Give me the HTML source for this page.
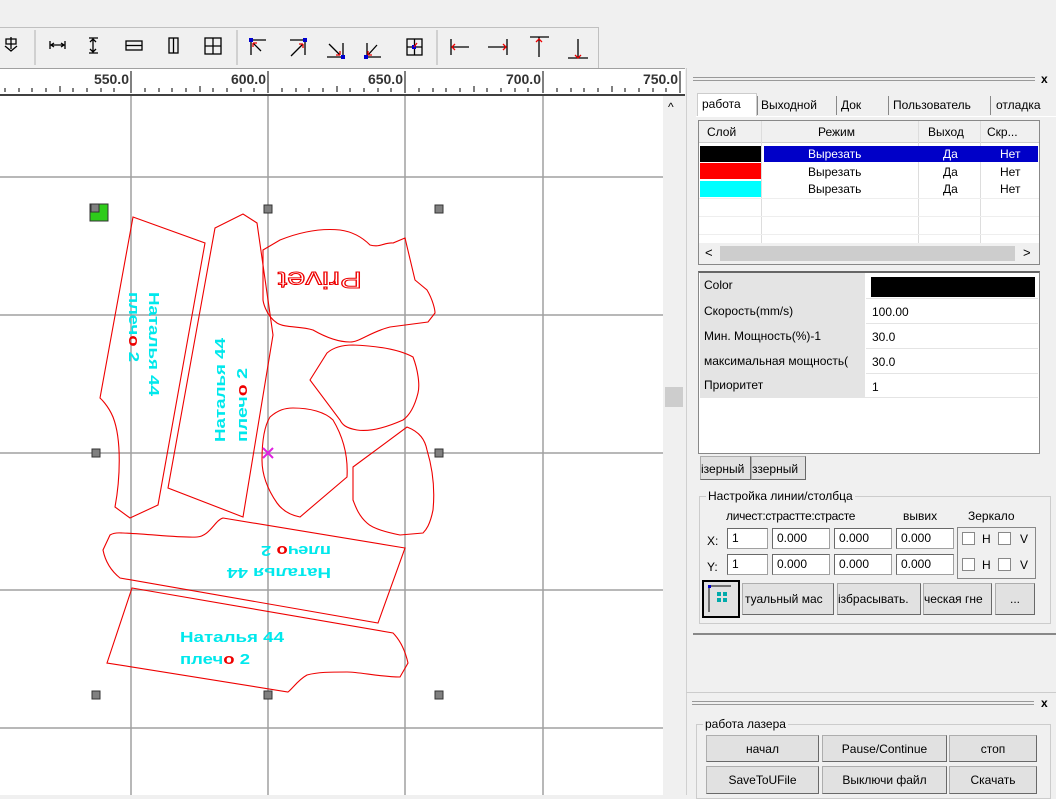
<!DOCTYPE html>
<html><head><meta charset="utf-8"><style>
*{box-sizing:border-box;margin:0;padding:0}
body{width:1056px;height:795px;overflow:hidden;background:#f0f0f0;font-family:"Liberation Sans","DejaVu Sans",sans-serif;font-size:12px;color:#000;position:relative}
.a{position:absolute}
.btn{position:absolute;background:#e1e1e1;border:1px solid #adadad;border-right-color:#696969;border-bottom-color:#696969;text-align:center;line-height:24px;font-size:12px;white-space:nowrap;overflow:hidden}
.inp{position:absolute;background:#fff;border:1px solid #a0a0a0;border-top-color:#696969;border-left-color:#696969;height:21px;line-height:19px;padding-left:4px;font-size:12px}
.cb{position:absolute;width:13px;height:13px;background:#fff;border:1px solid #888}
.tab{position:absolute;top:95px;height:21px;line-height:20px;font-size:12px;white-space:nowrap}
.sep{position:absolute;top:96px;width:1px;height:19px;background:#888}
</style></head><body>
<!-- toolbar -->
<div class="a" style="left:0;top:27px;width:598px;height:1px;background:#c0c0c0"></div>
<div class="a" style="left:598px;top:27px;width:1px;height:41px;background:#c0c0c0"></div>
<svg class="a" style="left:0;top:27px" width="600" height="41">
<g stroke="#000" fill="none" stroke-width="1.3">
<path d="M11 10v12M6 12h10v5H6zM5 19l6 5 6-5"/>
<line x1="35" y1="3" x2="35" y2="38" stroke="#c0c0c0"/>
<path d="M50 14v8M50 18h15M65 14v8M54 16l-3 2 3 2M61 16l3 2-3 2"/>
<path d="M89 11h9M93 11v15M89 26h9M90 15l3-3 3 3M90 22l3 3 3-3"/>
<rect x="126" y="14" width="16" height="9"/><path d="M126 18.5h16"/>
<rect x="169" y="11" width="9" height="15"/><path d="M173.5 11v15"/>
<rect x="205" y="11" width="16" height="16"/><path d="M213 11v16M205 19h16"/>
<line x1="237" y1="3" x2="237" y2="38" stroke="#c0c0c0"/>
<path d="M251 13h15M251 13v15M253 16l8 8"/>
<path d="M290 13h15M305 13v15M291 29l12-12"/>
<path d="M327 30h16M343 16v14M329 17l11 11"/>
<path d="M365 30h16M367 16v14M377 18l-9 10"/>
<rect x="407" y="12" width="15" height="16"/><path d="M414.5 12v16M407 20h15"/>
<line x1="437" y1="3" x2="437" y2="38" stroke="#c0c0c0"/>
<path d="M451 12v16M451 20h18M488 20h19M507 12v16M530 10h19M539 10v20M568 31h20M578 12v19"/>
</g>
<g fill="#0000d0"><rect x="249" y="11" width="4" height="4"/><rect x="303" y="11" width="4" height="4"/><rect x="341" y="28" width="4" height="4"/><rect x="364" y="28" width="4" height="4"/><rect x="412" y="18" width="4" height="4"/></g>
<g stroke="#e00" stroke-width="1.3" fill="none"><path d="M253 16h4M253 16v4M303 17h-4M303 17v4M340 28h-4M340 28v-4M368 28h4M368 28v-4M417 16l-3 4M455 17l-3 3 3 3M503 17l3 3-3 3M536 15l3-3 3 3M575 28l3 3 3-3"/></g>
</svg>
<!-- ruler -->
<div class="a" style="left:0;top:68px;width:685px;height:28px;background:#fff;border-top:1px solid #a0a0a0;border-bottom:2px solid #404040"></div>
<svg class="a" style="left:0;top:68px" width="685" height="28">
<g stroke="#000" stroke-width="1">
<path d="M131 3v22M268 3v22M405 3v22M543 3v22M680 3v22"/>
<path d="M5 20v4M19 20v4M32 20v4M46 20v4M60 18v6M73 20v4M87 20v4M101 20v4M114 20v4M145 20v4M159 20v4M172 20v4M186 20v4M200 18v6M213 20v4M227 20v4M241 20v4M254 20v4M282 20v4M296 20v4M309 20v4M323 20v4M337 18v6M350 20v4M364 20v4M378 20v4M391 20v4M419 20v4M433 20v4M446 20v4M460 20v4M474 18v6M487 20v4M501 20v4M515 20v4M528 20v4M557 20v4M571 20v4M584 20v4M598 20v4M612 18v6M625 20v4M639 20v4M653 20v4M666 20v4"/>
</g>
<g font-family="Liberation Sans" font-size="14" font-weight="bold" fill="#333" text-anchor="end">
<text x="129" y="16">550.0</text><text x="266" y="16">600.0</text><text x="403" y="16">650.0</text><text x="541" y="16">700.0</text><text x="678" y="16">750.0</text></g>
</svg>
<!-- canvas -->
<div class="a" style="left:0;top:96px;width:663px;height:699px;background:#fff"></div>
<div class="a" style="left:663px;top:96px;width:23px;height:699px;background:#f0f0f0"></div>
<div class="a" style="left:668px;top:100px;font-size:12px">^</div>
<div class="a" style="left:665px;top:387px;width:18px;height:20px;background:#cdcdcd"></div>
<svg class="a" style="left:0;top:0" width="663" height="795">
<g stroke="#a0a0a0" stroke-width="1.5"><path d="M131 96v699M268 96v699M405 96v699M543 96v699M0 177h663M0 315h663M0 453h663M0 590h663M0 728h663"/></g>
<g stroke="#e00" fill="none" stroke-width="1.1">
<path d="M133 217L205 243L158 505L130 518L115 507C120 480 122 440 113 417C108 405 100 398 100 398Z"/>
<path d="M215 228L243 214L257 223L273 335L243 517L168 488Z"/>
<path d="M263 250L280 240C300 232 320 228 340 230C355 232 365 240 370 245C380 248 385 242 393 243L405 238L415 280L427 290C433 300 435 310 435 313L428 322L390 327C370 332 360 342 350 342C335 342 320 334 313 330C300 326 285 328 277 323C265 315 263 300 263 300Z"/>
<path d="M310 380L327 353C335 346 345 345 353 345C380 346 400 350 413 357C418 370 420 385 418 393C415 405 410 415 403 420C385 428 370 432 357 430C345 428 342 424 340 420Z"/>
<path d="M270 417C278 410 285 408 293 408C310 408 325 412 333 420C345 440 348 460 347 477L300 517C290 515 282 510 277 503C268 490 262 475 262 460C262 440 265 425 270 417Z"/>
<path d="M353 467L407 427C420 432 425 440 427 450C433 470 435 490 433 510C430 525 426 530 423 533L400 535C385 532 372 528 367 523C358 515 355 505 353 500Z"/>
<path d="M223 518L405 548L378 623L120 578C110 570 105 560 103 550L110 535C115 532 120 533 123 533C150 534 180 538 197 537C210 536 215 520 223 518Z"/>
<path d="M132 588L393 633C400 640 405 650 408 663L400 677C380 677 360 672 347 672C330 672 318 672 307 675C298 680 293 688 288 692L107 663Z"/>
</g>
<g font-family="Liberation Sans" font-weight="bold" font-size="15" fill="#00e8ec">
<text transform="translate(149,292) rotate(90)" textLength="104" lengthAdjust="spacingAndGlyphs">Наталья 44</text>
<text transform="translate(129,292) rotate(90)" textLength="70" lengthAdjust="spacingAndGlyphs">плеч<tspan fill="#e00">о</tspan> 2</text>
<text transform="translate(225,442) rotate(-90)" textLength="104" lengthAdjust="spacingAndGlyphs">Наталья 44</text>
<text transform="translate(247,442) rotate(-90)" textLength="74" lengthAdjust="spacingAndGlyphs">плеч<tspan fill="#e00">о</tspan> 2</text>
<text transform="translate(331,568) rotate(180)" textLength="104" lengthAdjust="spacingAndGlyphs">Наталья 44</text>
<text transform="translate(331,546) rotate(180)" textLength="70" lengthAdjust="spacingAndGlyphs">плеч<tspan fill="#e00">о</tspan> 2</text>
<text x="180" y="642" textLength="104" lengthAdjust="spacingAndGlyphs">Наталья 44</text>
<text x="180" y="664" textLength="70" lengthAdjust="spacingAndGlyphs">плеч<tspan fill="#e00">о</tspan> 2</text>
</g>
<text transform="translate(362,272) rotate(180)" font-family="Liberation Sans" font-size="23" fill="none" stroke="#e00" stroke-width="1" textLength="84" lengthAdjust="spacingAndGlyphs">Privet</text>
<g fill="#808080" stroke="#333"><rect x="264" y="205" width="8" height="8"/><rect x="435" y="205" width="8" height="8"/><rect x="92" y="449" width="8" height="8"/><rect x="435" y="449" width="8" height="8"/><rect x="92" y="691" width="8" height="8"/><rect x="264" y="691" width="8" height="8"/><rect x="435" y="691" width="8" height="8"/></g>
<rect x="90" y="204" width="18" height="17" fill="#2ecc1a" stroke="#333"/><rect x="91" y="204" width="8" height="8" fill="#808080" stroke="#333"/>
<path d="M263 448l10 10M273 448l-10 10" stroke="#e020e0" stroke-width="2"/>
</svg>
<!-- right panel -->
<div class="a" style="left:686px;top:68px;width:370px;height:727px;background:#f0f0f0;border-left:1px solid #d0d0d0"></div>
<div class="a" style="left:693px;top:77px;width:342px;height:4px;border-top:1px solid #999;border-bottom:1px solid #999"></div>
<div class="a" style="left:1041px;top:72px;font-weight:bold;font-size:12px">x</div>
<div class="a" style="left:696px;top:116px;width:360px;height:1px;background:#fff"></div>
<div class="tab" style="left:697px;width:60px;background:#fff;height:23px;top:93px;border:1px solid #ccc;border-bottom:none;padding-left:4px;line-height:21px">работа</div>
<div class="sep" style="left:757px"></div>
<div class="tab" style="left:761px">Выходной</div>
<div class="sep" style="left:836px"></div>
<div class="tab" style="left:841px">Док</div>
<div class="sep" style="left:888px"></div>
<div class="tab" style="left:893px">Пользователь</div>
<div class="sep" style="left:990px"></div>
<div class="tab" style="left:996px">отладка</div>
<!-- table -->
<div class="a" style="left:698px;top:120px;width:342px;height:145px;background:#fff;border:1px solid #888"></div>
<div class="a" style="left:699px;top:121px;width:340px;height:22px;background:#f0f0f0;border-bottom:1px solid #ccc"></div>
<div class="a" style="left:707px;top:125px">Слой</div>
<div class="a" style="left:818px;top:125px">Режим</div>
<div class="a" style="left:928px;top:125px">Выход</div>
<div class="a" style="left:987px;top:125px">Скр...</div>
<div class="a" style="left:761px;top:121px;width:1px;height:122px;background:#ddd"></div>
<div class="a" style="left:918px;top:121px;width:1px;height:122px;background:#ddd"></div>
<div class="a" style="left:980px;top:121px;width:1px;height:122px;background:#ddd"></div>
<div class="a" style="left:699px;top:198px;width:340px;height:1px;background:#eee"></div>
<div class="a" style="left:699px;top:216px;width:340px;height:1px;background:#eee"></div>
<div class="a" style="left:699px;top:234px;width:340px;height:1px;background:#eee"></div>
<div class="a" style="left:700px;top:146px;width:61px;height:16px;background:#000"></div>
<div class="a" style="left:700px;top:163px;width:61px;height:16px;background:#f00"></div>
<div class="a" style="left:700px;top:181px;width:61px;height:16px;background:#0ff"></div>
<div class="a" style="left:764px;top:146px;width:274px;height:16px;background:#0000c8"></div>
<div class="a" style="left:808px;top:146px;color:#fff;line-height:16px">Вырезать</div>
<div class="a" style="left:943px;top:146px;color:#fff;line-height:16px">Да</div>
<div class="a" style="left:1000px;top:146px;color:#fff;line-height:16px">Нет</div>
<div class="a" style="left:808px;top:164px;line-height:16px">Вырезать</div>
<div class="a" style="left:943px;top:164px;line-height:16px">Да</div>
<div class="a" style="left:1000px;top:164px;line-height:16px">Нет</div>
<div class="a" style="left:808px;top:181px;line-height:16px">Вырезать</div>
<div class="a" style="left:943px;top:181px;line-height:16px">Да</div>
<div class="a" style="left:1000px;top:181px;line-height:16px">Нет</div>
<div class="a" style="left:699px;top:243px;width:340px;height:21px;background:#f0f0f0"></div>
<div class="a" style="left:720px;top:246px;width:295px;height:15px;background:#cdcdcd"></div>
<div class="a" style="left:705px;top:245px;font-size:13px">&lt;</div>
<div class="a" style="left:1023px;top:245px;font-size:13px">&gt;</div>
<!-- properties -->
<div class="a" style="left:698px;top:271px;width:342px;height:183px;background:#fff;border:1px solid #888;border-top:2px solid #666"></div>
<div class="a" style="left:700px;top:273px;width:165px;height:125px;background:#e4e4e4"></div>
<div class="a" style="left:704px;top:278px">Color</div>
<div class="a" style="left:871px;top:277px;width:164px;height:20px;background:#000"></div>
<div class="a" style="left:704px;top:304px">Скорость(mm/s)</div><div class="a" style="left:872px;top:305px">100.00</div>
<div class="a" style="left:704px;top:329px">Мин. Мощность(%)-1</div><div class="a" style="left:872px;top:330px">30.0</div>
<div class="a" style="left:704px;top:354px">максимальная мощность(</div><div class="a" style="left:872px;top:355px">30.0</div>
<div class="a" style="left:704px;top:378px">Приоритет</div><div class="a" style="left:872px;top:380px">1</div>
<div class="a" style="left:866px;top:298px;width:172px;height:1px;background:#e4e4e4"></div>
<div class="a" style="left:866px;top:323px;width:172px;height:1px;background:#e4e4e4"></div>
<div class="a" style="left:866px;top:348px;width:172px;height:1px;background:#e4e4e4"></div>
<div class="a" style="left:866px;top:373px;width:172px;height:1px;background:#e4e4e4"></div>
<div class="a" style="left:700px;top:397px;width:338px;height:1px;background:#e4e4e4"></div>
<div class="btn" style="left:700px;top:456px;width:51px;height:24px;text-align:left">ізерный</div>
<div class="btn" style="left:751px;top:456px;width:55px;height:24px;text-align:left">ззерный</div>
<!-- group -->
<div class="a" style="left:699px;top:496px;width:352px;height:128px;border:1px solid #ccc"></div>
<div class="a" style="left:706px;top:489px;background:#f0f0f0;padding:0 2px">Настройка линии/столбца</div>
<div class="a" style="left:726px;top:509px;font-size:12px;letter-spacing:-0.3px">личест:страстте:страсте</div>
<div class="a" style="left:903px;top:509px">вывих</div>
<div class="a" style="left:968px;top:509px">Зеркало</div>
<div class="a" style="left:707px;top:534px">X:</div><div class="a" style="left:707px;top:560px">Y:</div>
<div class="inp" style="left:727px;top:528px;width:41px">1</div>
<div class="inp" style="left:772px;top:528px;width:58px">0.000</div>
<div class="inp" style="left:834px;top:528px;width:58px">0.000</div>
<div class="inp" style="left:896px;top:528px;width:58px">0.000</div>
<div class="inp" style="left:727px;top:554px;width:41px">1</div>
<div class="inp" style="left:772px;top:554px;width:58px">0.000</div>
<div class="inp" style="left:834px;top:554px;width:58px">0.000</div>
<div class="inp" style="left:896px;top:554px;width:58px">0.000</div>
<div class="a" style="left:957px;top:527px;width:79px;height:52px;border:1px solid #888"></div>
<div class="cb" style="left:962px;top:532px"></div><div class="a" style="left:982px;top:532px">H</div><div class="cb" style="left:998px;top:532px"></div><div class="a" style="left:1020px;top:532px">V</div>
<div class="cb" style="left:962px;top:558px"></div><div class="a" style="left:982px;top:558px">H</div><div class="cb" style="left:998px;top:558px"></div><div class="a" style="left:1020px;top:558px">V</div>
<div class="a" style="left:702px;top:580px;width:38px;height:38px;border:2px solid #000;background:#e1e1e1"></div>
<svg class="a" style="left:706px;top:584px" width="30" height="30"><path d="M3 2v26M3 2h22" stroke="#000" fill="none"/><rect x="2" y="1" width="3" height="3" fill="#00c"/><g fill="#0aa"><rect x="11" y="8" width="4" height="4"/><rect x="17" y="8" width="4" height="4"/><rect x="11" y="14" width="4" height="4"/><rect x="17" y="14" width="4" height="4"/></g></svg>
<div class="btn" style="left:742px;top:583px;width:92px;height:32px;line-height:30px;text-align:left;padding-left:2px">туальный мас</div>
<div class="btn" style="left:837px;top:583px;width:84px;height:32px;line-height:30px;text-align:left">ізбрасывать.</div>
<div class="btn" style="left:923px;top:583px;width:69px;height:32px;line-height:30px;text-align:left">ческая гне</div>
<div class="btn" style="left:995px;top:583px;width:40px;height:32px;line-height:30px">...</div>
<div class="a" style="left:693px;top:633px;width:363px;height:2px;background:#888"></div>
<!-- bottom panel -->
<div class="a" style="left:686px;top:692px;width:370px;height:1px;background:#ccc"></div>
<div class="a" style="left:692px;top:701px;width:342px;height:4px;border-top:1px solid #999;border-bottom:1px solid #999"></div>
<div class="a" style="left:1041px;top:696px;font-weight:bold">x</div>
<div class="a" style="left:696px;top:724px;width:355px;height:75px;border:1px solid #ccc"></div>
<div class="a" style="left:703px;top:717px;background:#f0f0f0;padding:0 2px">работа лазера</div>
<div class="btn" style="left:706px;top:735px;width:113px;height:27px;line-height:26px">начал</div>
<div class="btn" style="left:822px;top:735px;width:125px;height:27px;line-height:26px">Pause/Continue</div>
<div class="btn" style="left:949px;top:735px;width:88px;height:27px;line-height:26px">стоп</div>
<div class="btn" style="left:706px;top:766px;width:113px;height:28px;line-height:26px">SaveToUFile</div>
<div class="btn" style="left:822px;top:766px;width:125px;height:28px;line-height:26px">Выключи файл</div>
<div class="btn" style="left:949px;top:766px;width:88px;height:28px;line-height:26px">Скачать</div>
</body></html>
